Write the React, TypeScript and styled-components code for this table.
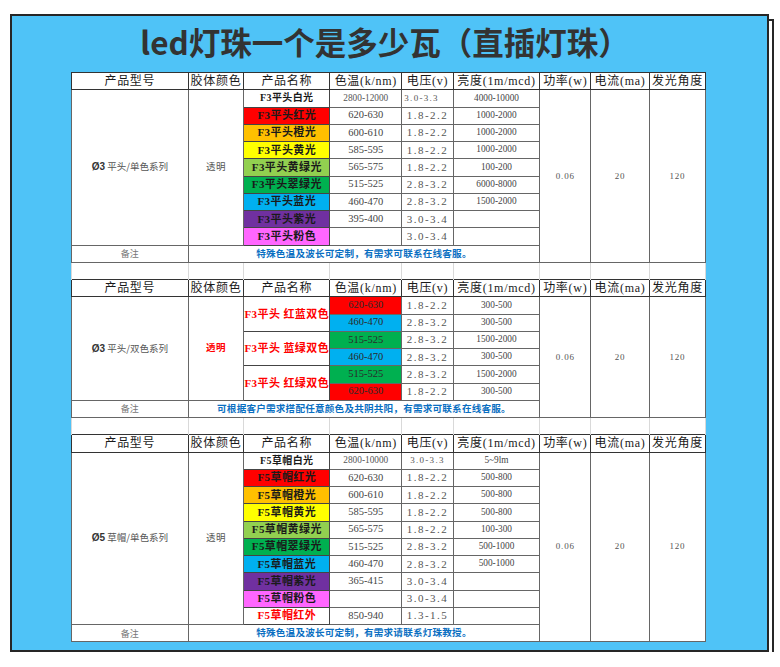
import React from 'react'
import styled, { createGlobalStyle, css } from 'styled-components'

const SERIF = `"Liberation Serif", "Noto Sans CJK SC", serif`
const SANS = `"Noto Sans CJK SC", "Noto Sans", sans-serif`

// Excel swatch colours used by the sheet
const C = {
  red: '#FF0000',
  orange: '#FFC000',
  yellow: '#FFFF00',
  lime: '#92D050',
  green: '#00B050',
  blue: '#00B0F0',
  purple: '#7030A0',
  pink: '#FF66FF',
}

type VoltMode = 'normal' | 'smallLeft' | 'smallCenter'

type Row = {
  name?: string
  nameSpan?: number
  nameBg?: string
  nameColor?: string
  nameSmall?: boolean
  temp: string
  tempBg?: string
  tempSmall?: boolean
  volt: string
  voltMode?: VoltMode
  lum: string
}

type Section = {
  model: string
  series: string
  glueRed?: boolean
  rows: Row[]
  remark: string
}

const GlobalStyle = createGlobalStyle`
  body {
    margin: 0;
    background: #ffffff;
  }
`

const Page = styled.div`
  padding: 14px 0 0 10px;
`

// Blue sheet with a second paper frame peeking out behind it
const Panel = styled.div`
  box-sizing: border-box;
  width: 759px;
  height: 638px;
  border: 2px solid #262626;
  background: #4fc3f7;
  box-shadow: 5px 5px 0 -2px #ffffff, 5px 5px 0 0 #262626;
`

const Title = styled.h1`
  margin: 0;
  height: 56px;
  padding: 0 9px 6px 0;
  box-sizing: border-box;
  display: flex;
  align-items: center;
  justify-content: center;
  font-family: ${SANS};
  font-size: 31.5px;
  font-weight: 700;
  color: #333333;
  white-space: nowrap;
`

const Sheet = styled.table`
  margin-left: 59px;
  width: 634px;
  table-layout: fixed;
  border-collapse: collapse;
  background: #ffffff;
`

const SheetRow = styled.tr`
  height: 17.25px;
`

const baseCell = css`
  padding: 0;
  border: 1px solid #666666;
  text-align: center;
  vertical-align: middle;
  white-space: nowrap;
  overflow: hidden;
  line-height: 1;
  font-family: ${SERIF};
`

const HeadCell = styled.th`
  ${baseCell};
  border-color: #333333;
  font-size: 12px;
  font-weight: 400;
  letter-spacing: 0.7px;
  color: #1a1a1a;
`

const ModelCell = styled.td`
  ${baseCell};
  font-family: ${SANS};
  font-size: 9.5px;
  color: #555555;

  b {
    font-family: "Liberation Sans", sans-serif;
    font-size: 10px;
    color: #333333;
  }
`

const GlueCell = styled.td<{ $red?: boolean }>`
  ${baseCell};
  font-size: 9.5px;
  letter-spacing: 0.5px;
  ${({ $red }) =>
    $red
      ? css`
          color: #ff0000;
          font-weight: 700;
        `
      : css`
          color: #555555;
        `}
`

const NameCell = styled.td<{ $bg?: string; $color?: string; $small?: boolean }>`
  ${baseCell};
  border-color: #444444;
  font-weight: 700;
  font-size: ${({ $small }) => ($small ? '10px' : '11px')};
  letter-spacing: 0.4px;
  background: ${({ $bg }) => $bg ?? '#ffffff'};
  color: ${({ $color }) => $color ?? '#1a1a1a'};
`

const TempCell = styled.td<{ $bg?: string; $small?: boolean }>`
  ${baseCell};
  font-size: ${({ $small }) => ($small ? '9.3px' : '10.5px')};
  color: ${({ $small, $bg }) => ($small ? '#555555' : $bg ? '#2a2a2a' : '#444444')};
  background: ${({ $bg }) => $bg ?? '#ffffff'};
`

const VoltCell = styled.td<{ $mode: VoltMode }>`
  ${baseCell};
  color: #555555;
  ${({ $mode }) =>
    $mode === 'normal'
      ? css`
          font-size: 11px;
          letter-spacing: 1.5px;
        `
      : css`
          font-size: 9px;
          letter-spacing: 1.3px;
          text-align: ${$mode === 'smallLeft' ? 'left' : 'center'};
          padding-left: ${$mode === 'smallLeft' ? '2px' : '0'};
        `}
`

const LumCell = styled.td`
  ${baseCell};
  font-size: 9.3px;
  color: #444444;
`

const SpecCell = styled.td`
  ${baseCell};
  font-size: 9px;
  letter-spacing: 0.8px;
  color: #555555;
`

const LabelCell = styled.td`
  ${baseCell};
  font-family: ${SANS};
  font-size: 9px;
  color: #777777;
`

const RemarkCell = styled.td`
  ${baseCell};
  font-size: 9.6px;
  font-weight: 700;
  letter-spacing: 0.2px;
  color: #0a6fc2;
`

const GapCell = styled.td`
  padding: 0;
  background: #ffffff;
  border-style: none solid;
  border-width: 1px;
  border-color: #d9d9d9;
`

const COLS = [116.7, 55.6, 86, 72, 51.4, 86.6, 51, 58.4, 56.6]
const HEADS = ['产品型号', '胶体颜色', '产品名称', '色温(k/nm)', '电压(v)', '亮度(1m/mcd)', '功率(w)', '电流(ma)', '发光角度']

const sections: Section[] = [
  {
    model: 'Ø3',
    series: '平头/单色系列',
    rows: [
      { name: 'F3平头白光', nameSmall: true, temp: '2800-12000', tempSmall: true, volt: '3.0-3.3', voltMode: 'smallLeft', lum: '4000-10000' },
      { name: 'F3平头红光', nameBg: C.red, temp: '620-630', volt: '1.8-2.2', lum: '1000-2000' },
      { name: 'F3平头橙光', nameBg: C.orange, temp: '600-610', volt: '1.8-2.2', lum: '1000-2000' },
      { name: 'F3平头黄光', nameBg: C.yellow, temp: '585-595', volt: '1.8-2.2', lum: '1000-2000' },
      { name: 'F3平头黄绿光', nameBg: C.lime, temp: '565-575', volt: '1.8-2.2', lum: '100-200' },
      { name: 'F3平头翠绿光', nameBg: C.green, temp: '515-525', volt: '2.8-3.2', lum: '6000-8000' },
      { name: 'F3平头蓝光', nameBg: C.blue, temp: '460-470', volt: '2.8-3.2', lum: '1500-2000' },
      { name: 'F3平头紫光', nameBg: C.purple, temp: '395-400', volt: '3.0-3.4', lum: '' },
      { name: 'F3平头粉色', nameBg: C.pink, temp: '', volt: '3.0-3.4', lum: '' },
    ],
    remark: '特殊色温及波长可定制，有需求可联系在线客服。',
  },
  {
    model: 'Ø3',
    series: '平头/双色系列',
    glueRed: true,
    rows: [
      { name: 'F3平头 红蓝双色', nameSpan: 2, nameColor: '#ff0000', temp: '620-630', tempBg: C.red, volt: '1.8-2.2', lum: '300-500' },
      { temp: '460-470', tempBg: C.blue, volt: '2.8-3.2', lum: '300-500' },
      { name: 'F3平头 蓝绿双色', nameSpan: 2, nameColor: '#ff0000', temp: '515-525', tempBg: C.green, volt: '2.8-3.2', lum: '1500-2000' },
      { temp: '460-470', tempBg: C.blue, volt: '2.8-3.2', lum: '300-500' },
      { name: 'F3平头 红绿双色', nameSpan: 2, nameColor: '#ff0000', temp: '515-525', tempBg: C.green, volt: '2.8-3.2', lum: '1500-2000' },
      { temp: '620-630', tempBg: C.red, volt: '1.8-2.2', lum: '300-500' },
    ],
    remark: '可根据客户需求搭配任意颜色及共阴共阳，有需求可联系在线客服。',
  },
  {
    model: 'Ø5',
    series: '草帽/单色系列',
    rows: [
      { name: 'F5草帽白光', nameSmall: true, temp: '2800-10000', tempSmall: true, volt: '3.0-3.3', voltMode: 'smallCenter', lum: '5~9lm' },
      { name: 'F5草帽红光', nameBg: C.red, temp: '620-630', volt: '1.8-2.2', lum: '500-800' },
      { name: 'F5草帽橙光', nameBg: C.orange, temp: '600-610', volt: '1.8-2.2', lum: '500-800' },
      { name: 'F5草帽黄光', nameBg: C.yellow, temp: '585-595', volt: '1.8-2.2', lum: '500-800' },
      { name: 'F5草帽黄绿光', nameBg: C.lime, temp: '565-575', volt: '1.8-2.2', lum: '100-300' },
      { name: 'F5草帽翠绿光', nameBg: C.green, temp: '515-525', volt: '2.8-3.2', lum: '500-1000' },
      { name: 'F5草帽蓝光', nameBg: C.blue, temp: '460-470', volt: '2.8-3.2', lum: '500-1000' },
      { name: 'F5草帽紫光', nameBg: C.purple, temp: '365-415', volt: '3.0-3.4', lum: '' },
      { name: 'F5草帽粉色', nameBg: C.pink, temp: '', volt: '3.0-3.4', lum: '' },
      { name: 'F5草帽红外', nameColor: '#ff0000', temp: '850-940', volt: '1.3-1.5', lum: '' },
    ],
    remark: '特殊色温及波长可定制，有需求请联系灯珠教授。',
  },
]

function SectionRows({ section }: { section: Section }) {
  const n = section.rows.length
  return (
    <>
      <SheetRow>
        {HEADS.map((h) => (
          <HeadCell key={h}>{h}</HeadCell>
        ))}
      </SheetRow>
      {section.rows.map((r, i) => (
        <SheetRow key={i}>
          {i === 0 && (
            <>
              <ModelCell rowSpan={n}>
                <b>{section.model}</b> {section.series}
              </ModelCell>
              <GlueCell rowSpan={n} $red={section.glueRed}>
                透明
              </GlueCell>
            </>
          )}
          {r.name !== undefined && (
            <NameCell rowSpan={r.nameSpan ?? 1} $bg={r.nameBg} $color={r.nameColor} $small={r.nameSmall}>
              {r.name}
            </NameCell>
          )}
          <TempCell $bg={r.tempBg} $small={r.tempSmall}>
            {r.temp}
          </TempCell>
          <VoltCell $mode={r.voltMode ?? 'normal'}>{r.volt}</VoltCell>
          <LumCell>{r.lum}</LumCell>
          {i === 0 && (
            <>
              <SpecCell rowSpan={n + 1}>0.06</SpecCell>
              <SpecCell rowSpan={n + 1}>20</SpecCell>
              <SpecCell rowSpan={n + 1}>120</SpecCell>
            </>
          )}
        </SheetRow>
      ))}
      <SheetRow>
        <LabelCell>备注</LabelCell>
        <RemarkCell colSpan={5}>{section.remark}</RemarkCell>
      </SheetRow>
    </>
  )
}

function GapRow() {
  return (
    <SheetRow>
      {COLS.map((_, i) => (
        <GapCell key={i} />
      ))}
    </SheetRow>
  )
}

export default function App() {
  return (
    <>
      <GlobalStyle />
      <Page>
        <Panel>
          <Title>led灯珠一个是多少瓦（直插灯珠）</Title>
          <Sheet>
            <colgroup>
              {COLS.map((w, i) => (
                <col key={i} style={{ width: w }} />
              ))}
            </colgroup>
            <tbody>
              {sections.map((s, i) => (
                <React.Fragment key={i}>
                  {i > 0 && <GapRow />}
                  <SectionRows section={s} />
                </React.Fragment>
              ))}
            </tbody>
          </Sheet>
        </Panel>
      </Page>
    </>
  )
}
